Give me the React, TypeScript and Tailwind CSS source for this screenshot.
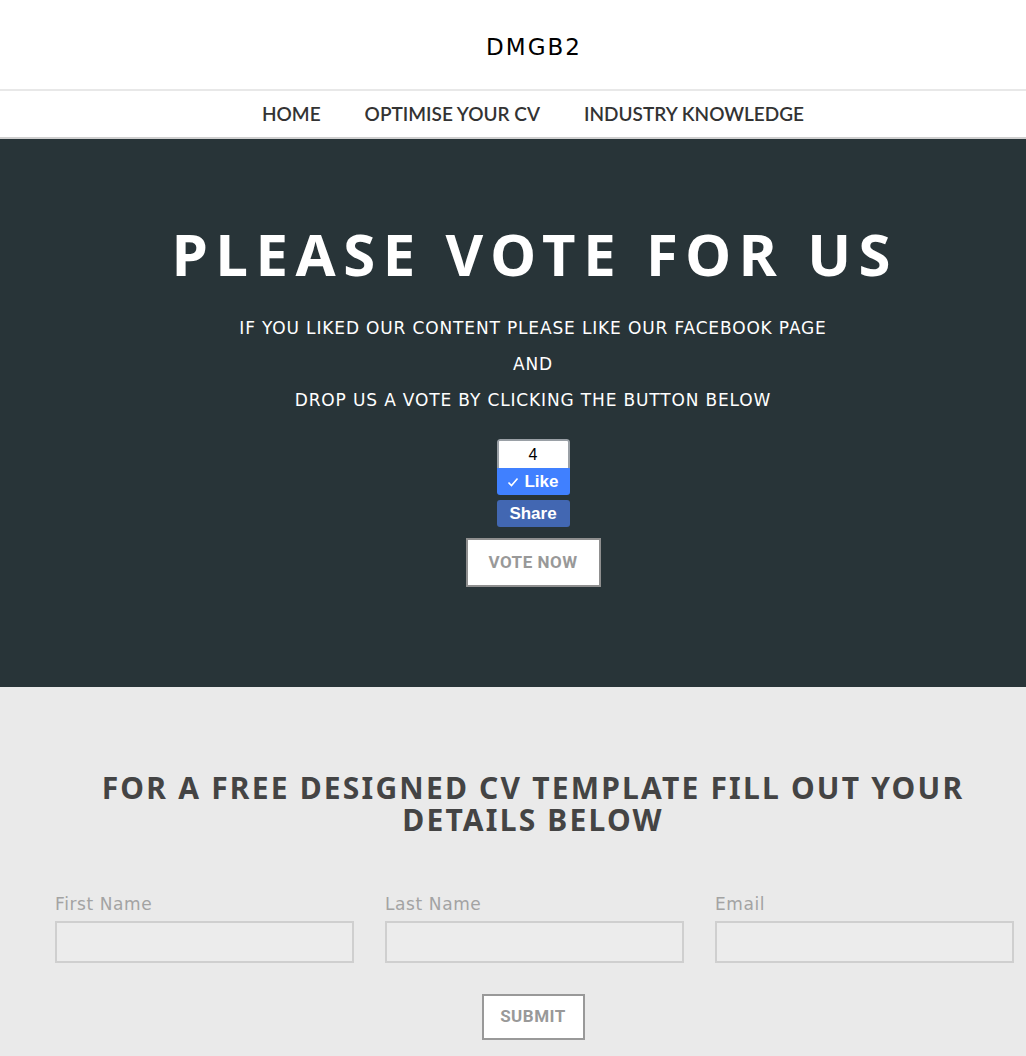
import React from "react";

const mont = { fontFamily: "'DejaVu Sans', 'Noto Sans', sans-serif" };
const noto = { fontFamily: "'Noto Sans', 'DejaVu Sans', sans-serif" };

export default function App() {
  return (
    <div className="w-[1026px] min-h-[1056px] overflow-hidden bg-[#eaeaea]">
      <div className="w-[1066px] bg-[#eaeaea]" style={mont}>
        <header className="bg-white h-[91px] flex items-center justify-center border-b-2 border-[#e8e8e8]">
          <div className="text-[23px] text-black tracking-[2px] mt-[5px] pl-[2px]">DMGB2</div>
        </header>
        <nav className="bg-white h-[48px] flex items-center justify-center gap-[44px] border-b-2 border-[#cfcfcf]" style={{ fontFamily: "Lato, sans-serif" }}>
          <span className="text-[19px] text-[#333] font-semibold">HOME</span>
          <span className="text-[19px] text-[#333] font-semibold">OPTIMISE YOUR CV</span>
          <span className="text-[19px] text-[#333] font-semibold">INDUSTRY KNOWLEDGE</span>
        </nav>
        <section className="bg-[#283438] h-[548px] flex flex-col items-center pt-[79px]">
          <h1 className="text-white text-[58px] font-bold tracking-[7.6px] leading-[72px] pl-[4px]" style={noto}>PLEASE VOTE FOR US</h1>
          <div className="mt-[20px] flex flex-col items-center text-white text-[17px] leading-[36px] tracking-[0.85px]">
            <p>IF YOU LIKED OUR CONTENT PLEASE LIKE OUR FACEBOOK PAGE</p>
            <p>AND</p>
            <p>DROP US A VOTE BY CLICKING THE BUTTON BELOW</p>
          </div>
          <div className="mt-[21px] flex flex-col items-center" style={{ fontFamily: "'Liberation Sans', Arial, sans-serif" }}>
            <div className="w-[73px] rounded-[3px] overflow-hidden">
              <div className="h-[29px] bg-white border-2 border-b-0 border-[#9aa0a6] rounded-t-[3px] flex items-center justify-center text-[16px] text-black">4</div>
              <div className="h-[27px] bg-[#4080ff] flex items-center justify-center gap-[5px] text-white font-bold text-[17px]">
                <svg width="12" height="12" viewBox="0 0 12 12" fill="none" stroke="white" strokeWidth="1.6"><path d="M1.5 6.5 L4.5 9.5 L10.5 2.5" /></svg>
                Like
              </div>
            </div>
            <div className="mt-[5px] w-[73px] h-[27px] rounded-[3px] bg-[#4267b2] flex items-center justify-center text-white font-bold text-[17px]">Share</div>
            <button className="mt-[11px] w-[135px] h-[49px] bg-white border-2 border-[#8f8f8f] text-[#999] font-bold text-[17px] tracking-[0.5px]" style={{ fontFamily: "Roboto, sans-serif" }}>VOTE NOW</button>
          </div>
        </section>
        <section className="bg-[#eaeaea] pt-[85px] px-[55px]">
          <h2 className="text-center text-[#444] font-bold text-[30px] leading-[32px] tracking-[2.2px] px-[30px]" style={noto}>FOR A FREE DESIGNED CV TEMPLATE FILL OUT YOUR DETAILS BELOW</h2>
          <div className="mt-[56px] grid grid-cols-3 gap-[31px] w-[959px]">
            {["First Name", "Last Name", "Email"].map((l) => (
              <div key={l} className="flex flex-col">
                <label className="text-[#a3a3a3] text-[17px] leading-[24px] tracking-[0.6px]">{l}</label>
                <div className="mt-[5px] h-[42px] border-2 border-[#cfcfcf] bg-[#ececec]" />
              </div>
            ))}
          </div>
          <div className="flex justify-center mt-[31px] pb-[18px]">
            <button className="w-[103px] h-[46px] bg-white border-2 border-[#999] text-[#999] font-bold text-[17px] tracking-[0.5px]" style={{ fontFamily: "Roboto, sans-serif" }}>SUBMIT</button>
          </div>
        </section>
      </div>
    </div>
  );
}
